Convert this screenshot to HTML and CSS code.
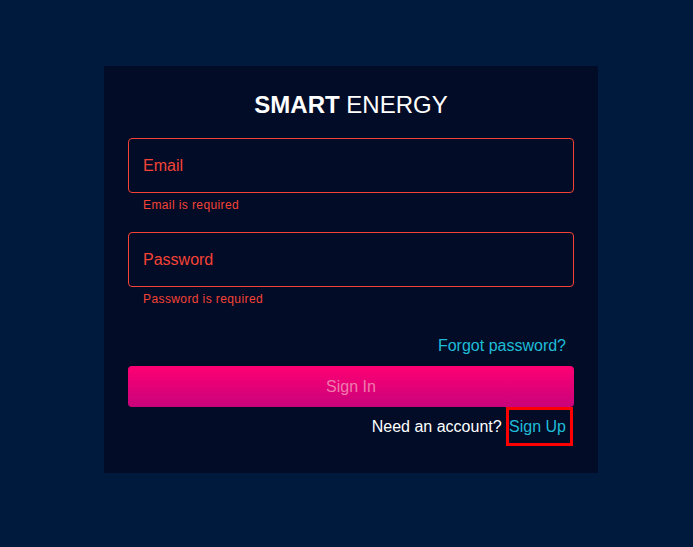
FILE: index.html
```html
<!DOCTYPE html>
<html lang="en">
<head>
  <meta charset="UTF-8">
  <title>Smart Energy - Sign In</title>
  <link rel="stylesheet" href="styles.css">
</head>
<body>
  <div class="login-box">
    <h1 class="brand"><b>SMART</b> ENERGY</h1>

    <div class="field">
      <input type="text" placeholder="Email">
    </div>
    <p class="helper">Email is required</p>

    <div class="field second">
      <input type="password" placeholder="Password">
    </div>
    <p class="helper">Password is required</p>

    <div class="forgot">
      <a href="#">Forgot password?</a>
    </div>

    <button class="sign-in" disabled>Sign In</button>

    <div class="signup-row">
      Need an account? <a href="#" class="signup-link">Sign Up</a>
    </div>
  </div>
</body>
</html>
```

FILE: styles.css
```css
body {
  margin: 0;
  background: #001a3d;
  font-family: "Liberation Sans", Arial, sans-serif;
  height: 547px;
}

.login-box {
  margin: 66px 0 0 104px;
  width: 494px;
  box-sizing: border-box;
  padding: 24px 24px 27px;
  background: #020c27;
}

.brand {
  margin: 0;
  padding-top: 2px;
  font-size: 24px;
  line-height: 26px;
  font-weight: normal;
  color: #fff;
  text-align: center;
}

.field {
  margin-top: 20px;
}

.field.second {
  margin-top: 17px;
}

.field input {
  display: block;
  width: 100%;
  height: 55px;
  box-sizing: border-box;
  padding: 0 14px;
  border: 1px solid #f44336;
  border-radius: 4px;
  background: transparent;
  color: #fff;
  font-family: inherit;
  font-size: 16px;
  outline: none;
}

.field input::placeholder {
  color: #f44336;
  opacity: 1;
}

.helper {
  margin: 2px 0 0 15px;
  font-size: 12px;
  line-height: 20px;
  letter-spacing: 0.4px;
  color: #f44336;
}

.forgot {
  margin-top: 22px;
  text-align: right;
}

.forgot a {
  display: inline-block;
  padding: 6px 8px;
  line-height: 18px;
  font-size: 16px;
  color: #1fbcd8;
  text-decoration: none;
}

.sign-in {
  display: block;
  width: 100%;
  height: 41px;
  margin-top: 5px;
  border: none;
  border-radius: 4px;
  background: linear-gradient(#ff0073, #c8037b);
  color: #f07aae;
  font-family: inherit;
  font-size: 16px;
}

.signup-row {
  text-align: right;
  margin-right: 1px;
  font-size: 16px;
  color: #fff;
}

.signup-link {
  display: inline-block;
  padding: 7px 4px 7px 0;
  line-height: 19px;
  border: 3px solid #ff0000;
  color: #1fbcd8;
  text-decoration: none;
}
```
